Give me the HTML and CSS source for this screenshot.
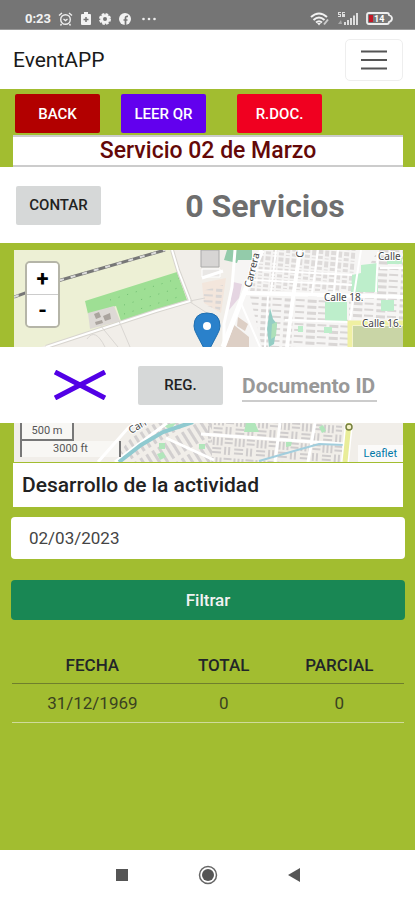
FILE: index.html
```
<!DOCTYPE html>
<html lang="es">

<head>
    <meta charset="UTF-8">
    <meta name="viewport" content="width=device-width, initial-scale=1.0">
    <title>EventAPP</title>

    <link rel="stylesheet" href="styles.css">
</head>

<body>

    <div class="status-bar">
        <div class="status-group">
            <span class="clock">0:23</span>
            <svg width="15" height="14" viewBox="0 0 15 14" fill="none" stroke="#eee" stroke-width="1.4">
                <circle cx="7.5" cy="7.5" r="4.8" />
                <path d="M1 3.5 4 1M14 3.5 11 1M5.5 7l2 1.5 2-1.5M3.5 12l-1 1.5M11.5 12l1 1.5" />
            </svg>
            <svg width="10" height="13" viewBox="0 0 10 13">
                <path d="M3 2V0h4v2h2q1 0 1 1v9q0 1-1 1H1q-1 0-1-1V3q0-1 1-1z" fill="#f2f2f2" />
                <path d="M5 5v5M2.500 7.500h5" stroke="#757575" stroke-width="1.500" />
            </svg>
            <svg width="12" height="12" viewBox="0 0 12 12">
                <circle cx="6" cy="6" r="4.800" fill="#f2f2f2" />
                <circle cx="6" cy="6" r="5" fill="none" stroke="#f2f2f2" stroke-width="2" stroke-dasharray="2.600 1.330" />
                <circle cx="6" cy="6" r="2" fill="#757575" />
            </svg>
            <svg width="12" height="12" viewBox="0 0 12 12">
                <circle cx="6" cy="6" r="6" fill="#f2f2f2" />
                <path d="M6.500 12V5q0-2 2.500-1.600M4.500 7h4" fill="none" stroke="#757575" stroke-width="1.700" />
            </svg>
            <svg class="more" width="14" height="4" viewBox="0 0 14 4" fill="#eee">
                <circle cx="1.500" cy="2" r="1.300" />
                <circle cx="7" cy="2" r="1.300" />
                <circle cx="12.500" cy="2" r="1.300" />
            </svg>
        </div>
        <div class="status-group status-right">
            <svg width="20" height="14" viewBox="0 0 20 14" fill="none" stroke="#f2f2f2" stroke-width="2">
                <path d="M1 5q8-7 16 0M3.500 8q5.500-5 11 0M6 10.500q3-2.500 6 0" />
                <path d="M9 13.500l-2-2.500h4z" fill="#f2f2f2" stroke="none" />
                <path d="M14 12.500l4-5" stroke="#ccc" />
            </svg>
            <svg width="22" height="13" viewBox="0 0 22 13" fill="#ddd">
                <path d="M7 10h2v3H7zM10 8h2v5h-2zM13 6h2v7h-2zM16 3.500h2V13h-2zM19 1h2v12h-2z" />
                <path d="M1 0h3v1H2v1h2v3H1V4h2V3H1zM5 0h3v1H6v1h2v3H5z" />
                <path d="M1 12l3-4 1 4z" fill="#aaa" />
            </svg>
            <svg width="27" height="13" viewBox="0 0 27 13">
                <path d="M3 1h18q2 0 2 2 3 1 3 3.500T23 10q0 2-2 2H3q-2 0-2-2V3q0-2 2-2z" fill="#777" stroke="#eee" stroke-width="1.800" />
                <path d="M3 3h4v7H3z" fill="#c41826" />
                <text class="battery-text" x="8" y="10">14</text>
            </svg>
        </div>
    </div>

    <header class="navbar">
        <a class="brand" href="#">EventAPP</a>
        <button class="toggler" type="button" aria-label="Menu">
            <svg width="26" height="20" viewBox="0 0 26 20" stroke="#555" stroke-width="2">
                <path d="M0 1.500h26M0 10h26M0 18.500h26" />
            </svg>
        </button>
    </header>

    <main>
        <div class="actions">
            <button class="btn btn-back" type="button">BACK</button>
            <button class="btn btn-qr" type="button">LEER QR</button>
            <button class="btn btn-doc" type="button">R.DOC.</button>
        </div>

        <h1 class="title">Servicio 02 de Marzo</h1>

        <div class="counter">
            <button class="btn btn-gray" type="button">CONTAR</button>
            <div class="count">0 Servicios</div>
        </div>

        <div class="map-wrap">
            <div class="map">
                <svg class="tiles" viewBox="14 250 389 212" preserveAspectRatio="xMidYMid slice">
                    <defs>
                        <pattern id="blocks" width="13" height="11" patternUnits="userSpaceOnUse" patternTransform="rotate(5)">
                            <path fill="#dedbda" d="M1 1h5v4H1zM8 1h4v6H8zM1 7h5v3H1zM8 9h4v1H8z" />
                        </pattern>
                        <pattern id="rows" width="23" height="6" patternUnits="userSpaceOnUse" patternTransform="rotate(3)">
                            <path fill="#d9d6d5" d="M1 1h9v3H1zM12 1h9v2h-9z" />
                        </pattern>
                        <pattern id="slant" width="7" height="22" patternUnits="userSpaceOnUse" patternTransform="rotate(-32)">
                            <path fill="#d2cfcf" d="M1 1h3v18H1z" />
                        </pattern>
                        <pattern id="mixed" width="22" height="20" patternUnits="userSpaceOnUse" patternTransform="rotate(4)">
                            <path fill="#cfcccc" d="M1 1h2v8H1zM5 1h2v8H5zM9 1h2v8H9zM13 1h8v2h-8zM13 5h8v2h-8zM1 11h9v2H1zM1 15h9v2H1zM13 10h2v8h-2zM17 10h2v8h-2z" />
                        </pattern>
                    </defs>

                    <path fill="#f1eee9" d="M14 250h389v212H14z" />
                    <path fill="#edf0d5" d="M14 250h159l14 50-46 15-100 32H14z" />

                    <!-- city blocks -->
                    <path fill="#f6f5f4" d="M236 250h167v97H222z" />
                    <path fill="url(#blocks)" d="M260 250h96l-4 41H250z" />
                    <path fill="url(#rows)" d="M250 296h74l24 24v27H262zM378 250h25v70h-54v-18z" />
                    <path fill="#f3e6dc" d="M202 283l24-5-5 35-17-10z" />
                    <path fill="#e5d5e2" d="M233 282l9 2-3 14-10 12z" />
                    <path fill="url(#rows)" d="M202 291l21-6-3 25-16-5z" />
                    <path fill="#ddcfc5" d="M234 325l15 12v10h-23zM238 317l10 7-3 7-8-5z" />
                    <path fill="#d7d5d4" stroke="#aaa" d="M201 250h18v17h-18z" />
                    <path fill="#e9e7e5" stroke="#fff" d="M202 269h18v8h-18z" />

                    <!-- parks -->
                    <path fill="#9edf94" d="M85 301l92-29 10 28-66 21-5-15-28 8z" />
                    <path fill="none" stroke="#6fbd71" stroke-dasharray="1 8" d="M110 300l70-22M124 305l60-19M124 314l60-19" />
                    <path fill="#ddd9d5" d="M88 313l26-7 6 15-30 8z" />
                    <path fill="#aaa49e" d="M94 314l5-2 2 5-5 2zM103 316l7-3 1 6-6 2zM95 322l7-2 1 3-7 2z" />
                    <path fill="#93cbaa" d="M227 250h25v10h-14l-1 3-13-3z" />
                    <path fill="#bdeecb" d="M361 265l17-2v29h-27l1-17 9-2zM325 302h22v19h-22zM381 300h13v11h-13zM387 258h15v6h-15zM298 326h5v6h-5zM324 327h8v6h-8z" />
                    <path fill="#c9d5a6" d="M353 326h50v21h-50z" />
                    <path fill="#94cdc4" d="M270 308l3 11 4 5-3 20-5 3-2-19z" />
                    <path fill="#aee0b9" d="M272 324l5-2-1 14-5 3z" />

                    <!-- streets -->
                    <g fill="none" stroke="#fff" stroke-width="3">
                        <path d="M172 250l6 20 12 31-34 10-110 36" stroke="#d8d5cf" stroke-width="4" />
                        <path d="M172 250l6 20 12 31-34 10-110 36" stroke-width="2" />
                        <path d="M235 250l-3 37-8 37v23M202 278l21-7" />
                        <path d="M262 250l-17 41-22 56" stroke-width="5" />
                        <path d="M242 293l161 4" stroke-width="4" />
                        <path d="M300 250l-8 55-5 42" stroke-width="4" />
                        <path d="M361 250l-11 70M276 250l-5 42M318 250l-6 43M338 250l-4 43M256 270l96 5M254 280l98 5M378 252l-2 40M285 320l64 2M268 296l-3 51M240 301l20 46M380 268h23" stroke-width="2" />
                    </g>
                    <path fill="none" stroke="#dad7d3" d="M87 339q8-12 18 8M100 325l18 22M119 321l11 26M190 302l17 11M190 301l15-3" />
                    <path fill="none" stroke="#eff0a2" stroke-width="5" d="M350 347v-24h53" />
                    <path fill="none" stroke="#777" stroke-width="3" d="M14 297l47-17 104-30" />
                    <path fill="none" stroke="#ddd" stroke-width="2" stroke-dasharray="5 7" d="M14 297l47-17 104-30" />

                    <!-- south side -->
                    <path fill="url(#slant)" d="M142 423h70v39h-82l-10-10z" />
                    <path fill="url(#mixed)" d="M208 423h134v39H208z" />
                    <path fill="#b1e6bb" d="M246 423h9l4 9h-15zM163 425l13-2-6 7zM159 443h6v6h-6zM199 444h6v5h-6zM319 427l4-2 3 6-4 2zM157 454l6-2 3 5-6 3zM286 442l6-1-1 5-5 1z" />
                    <path fill="none" stroke="#fff" stroke-width="3" d="M98 462l30-34 8-6M115 462l52-39M166 438l48 22M201 434l142 10M280 423l-5 39M315 423l-7 39" />
                    <path fill="none" stroke="#8fcad0" stroke-width="4" d="M119 462l22-17 22-13 30-10" />
                    <path fill="none" stroke="#a2cedd" stroke-width="2" d="M259 461l42-12 18-5 26 1" />
                    <path fill="none" stroke="#fff" stroke-width="8" d="M349 423l-4 39" />
                    <path fill="none" stroke="#e9ed99" stroke-width="5" d="M349 423l-4 39" />
                    <circle cx="349" cy="427" r="3" fill="#f4f2c4" stroke="#76803f" stroke-width="1.500" />

                    <g class="street-name">
                        <text x="324" y="301">Calle 18.</text>
                        <text x="362" y="327">Calle 16.</text>
                        <text x="378" y="260">Calle</text>
                        <text transform="translate(251 288) rotate(-76)">Carrera</text>
                        <text transform="translate(303 258) rotate(-85)">C</text>
                        <text transform="translate(131 434) rotate(-30)">Carr</text>
                    </g>

                    <path fill="#2a81cb" stroke="#1f6fb0" d="M207 354l-10-19q-3-5-3-9 0-13 13-13t13 13q0 4-3 9z" />
                    <circle cx="207" cy="326" r="4" fill="#fff" />
                </svg>

                <div class="zoom">
                    <button type="button" aria-label="Acercar">+</button>
                    <button type="button" aria-label="Alejar">-</button>
                </div>

                <div class="scale">
                    <div class="scale-m">500 m</div>
                    <div class="scale-ft">3000 ft</div>
                </div>

                <a class="attribution" href="#">Leaflet</a>
            </div>

            <div class="register">
                <button class="clear" type="button" aria-label="Borrar">
                    <svg width="54" height="30" viewBox="0 0 54 30" stroke="#5200e6" stroke-width="5">
                        <path d="M2 2l50 26M52 2L2 28" />
                    </svg>
                </button>
                <button class="btn btn-gray" type="button">REG.</button>
                <input class="doc-id" type="text" placeholder="Documento ID" aria-label="Documento ID">
            </div>
        </div>

        <label class="subtitle" for="fecha">Desarrollo de la actividad</label>

        <div class="filter">
            <input class="date" type="text" id="fecha" name="fecha" value="02/03/2023">
            <button class="filter-btn" type="button">Filtrar</button>
        </div>

        <table class="report">
            <thead>
                <tr>
                    <th class="col-date">FECHA</th>
                    <th class="col-total">TOTAL</th>
                    <th>PARCIAL</th>
                </tr>
            </thead>
            <tbody>
                <tr>
                    <td>31/12/1969</td>
                    <td>0</td>
                    <td>0</td>
                </tr>
            </tbody>
        </table>
    </main>

    <nav class="system-nav">
        <button type="button" aria-label="Recientes">
            <svg width="20" height="20" viewBox="0 0 20 20">
                <path d="M4 4h12v12H4z" fill="#555" />
            </svg>
        </button>
        <button type="button" aria-label="Inicio">
            <svg width="20" height="20" viewBox="0 0 20 20">
                <circle cx="10" cy="10" r="8.500" fill="none" stroke="#666" stroke-width="1.500" />
                <circle cx="10" cy="10" r="6" fill="#555" />
            </svg>
        </button>
        <button type="button" aria-label="Volver">
            <svg width="20" height="20" viewBox="0 0 20 20">
                <path d="M4 10l12-7v14z" fill="#555" />
            </svg>
        </button>
    </nav>

</body>

</html>
```

FILE: styles.css
```
* {
    box-sizing: border-box;
}

body {
    margin: 0;
    min-height: 100vh;
    display: flex;
    flex-direction: column;
    font-family: Roboto, Arial, sans-serif;
    font-size: 16px;
    color: #212529;
    background-color: #fff;
}

button,
input {
    font-family: inherit;
    margin: 0;
}

button {
    border: none;
    padding: 0;
    cursor: pointer;
}

svg {
    display: block;
}

/* phone status bar */
.status-bar {
    height: 30px;
    padding: 8px 22px 0 25px;
    display: flex;
    justify-content: space-between;
    background-color: #757575;
    border-bottom: 1px solid #999;
}

.status-group {
    display: flex;
    align-items: center;
    gap: 8px;
}

.status-right {
    gap: 7px;
}

.clock {
    font-size: 13px;
    font-weight: bold;
    color: #f2f2f2;
    margin-right: -1px;
}

.more {
    margin-left: 3px;
}

.battery-text {
    font-size: 9px;
    font-weight: bold;
    fill: #fff;
}

.navbar {
    height: 59px;
    padding: 0 12px 0 13px;
    display: flex;
    justify-content: space-between;
    align-items: center;
}

.brand {
    font-size: 21px;
    color: #1a1a1a;
    text-decoration: none;
}

.toggler {
    width: 58px;
    height: 42px;
    display: flex;
    align-items: center;
    justify-content: center;
    background-color: #fff;
    border: 1px solid #eee;
    border-radius: 5px;
}

main {
    flex: 1;
    background-color: #a2bd30;
}

.btn {
    width: 85px;
    height: 39px;
    border-radius: 2px;
    font-size: 15px;
    font-weight: 500;
    color: #fff;
}

.actions {
    display: flex;
    gap: 21px;
    padding: 5px 15px 2px;
}

.btn-back {
    background-color: #b20000;
}

.btn-qr {
    background-color: #6200ee;
}

.btn-doc {
    background-color: #f00020;
    margin-left: 10px;
}

.btn-gray {
    background-color: #d6d8d8;
    color: #222;
}

.title {
    margin: 0 12px 0 13px;
    background-color: #fff;
    border-top: 2px solid #ccc;
    border-bottom: 2px solid #ccc;
    font-size: 23px;
    line-height: 28px;
    font-weight: 500;
    text-align: center;
    color: #640808;
}

.counter {
    height: 76px;
    padding: 0 16px;
    display: flex;
    align-items: center;
    background-color: #fff;
}

.count {
    flex: 1;
    padding: 2px 0 0 30px;
    text-align: center;
    font-size: 32px;
    font-weight: bold;
    color: #6e6e6e;
}

.map-wrap {
    position: relative;
    padding: 7px 12px 1px 14px;
}

.map {
    position: relative;
    height: 212px;
    overflow: hidden;
}

.tiles {
    width: 100%;
    height: 100%;
}

.street-name {
    font-family: "Noto Sans", sans-serif;
    font-size: 10px;
    fill: #444;
    stroke: #fff;
    stroke-width: 2px;
    paint-order: stroke;
}

.zoom {
    position: absolute;
    top: 11px;
    left: 11px;
    display: flex;
    flex-direction: column;
    border: 2px solid #b5b5a8;
    border-radius: 5px;
    overflow: hidden;
}

.zoom button {
    width: 31px;
    height: 31px;
    background-color: #fff;
    font-size: 22px;
    line-height: 31px;
    font-weight: bold;
    color: #000;
}

.zoom button:first-child {
    height: 32px;
    border-bottom: 1px solid #ccc;
}

.scale {
    position: absolute;
    left: 6px;
    bottom: 5px;
    font-size: 11px;
    line-height: 16px;
    text-align: center;
    color: #555;
}

.scale-m,
.scale-ft {
    background-color: rgba(255, 255, 255, 0.5);
    border: 2px solid #777;
    border-top: none;
}

.scale-m {
    width: 54px;
}

.scale-ft {
    width: 101px;
    border-bottom: none;
}

.attribution {
    position: absolute;
    right: 0;
    bottom: 0;
    padding: 0 6px;
    font-size: 11px;
    line-height: 17px;
    color: #0078a8;
    background-color: rgba(255, 255, 255, 0.7);
    text-decoration: none;
}

/* white bar floating over the map */
.register {
    position: absolute;
    top: 104px;
    left: 0;
    right: 0;
    height: 76px;
    padding: 0 38px 0 53px;
    display: flex;
    align-items: center;
    background-color: #fff;
}

.clear {
    background: none;
    margin-right: 31px;
}

.doc-id {
    flex: 1;
    min-width: 0;
    margin-left: 19px;
    padding: 5px 0 2px;
    border: none;
    border-bottom: 2px solid #ccc;
    font-size: 21px;
    font-weight: bold;
    color: #555;
}

.doc-id::placeholder {
    color: #999;
}

.subtitle {
    display: block;
    margin: 0 12px 0 13px;
    padding: 0 9px;
    background-color: #fff;
    font-size: 21px;
    font-weight: 500;
    line-height: 44px;
    color: #222;
}

.filter {
    padding: 10px 10px 0 11px;
}

.date {
    display: block;
    width: 100%;
    height: 42px;
    padding: 0 18px;
    background-color: #fff;
    border: none;
    border-radius: 4px;
    font-size: 17px;
    color: #444;
}

.filter-btn {
    display: block;
    width: 100%;
    height: 40px;
    margin-top: 21px;
    background-color: #198754;
    border-radius: 4px;
    font-size: 17px;
    font-weight: 500;
    color: #f2f2f2;
}

.report {
    width: calc(100% - 23px);
    margin: 26px 11px 0 12px;
    border-collapse: collapse;
    text-align: center;
    font-size: 17px;
    line-height: 22px;
}

.report th,
.report td {
    padding: 8px 0;
    font-weight: 400;
    border-bottom: 1px solid #d0db9a;
}

.report td {
    color: #3a4220;
}

.report th {
    padding-bottom: 7px;
    font-weight: 500;
    border-bottom: 1px solid #6f7f2c;
}

.col-date {
    width: 41%;
}

.col-total {
    width: 26%;
}

.system-nav {
    height: 50px;
    display: flex;
    justify-content: center;
    align-items: center;
    gap: 66px;
}

.system-nav button {
    background: none;
}
```
